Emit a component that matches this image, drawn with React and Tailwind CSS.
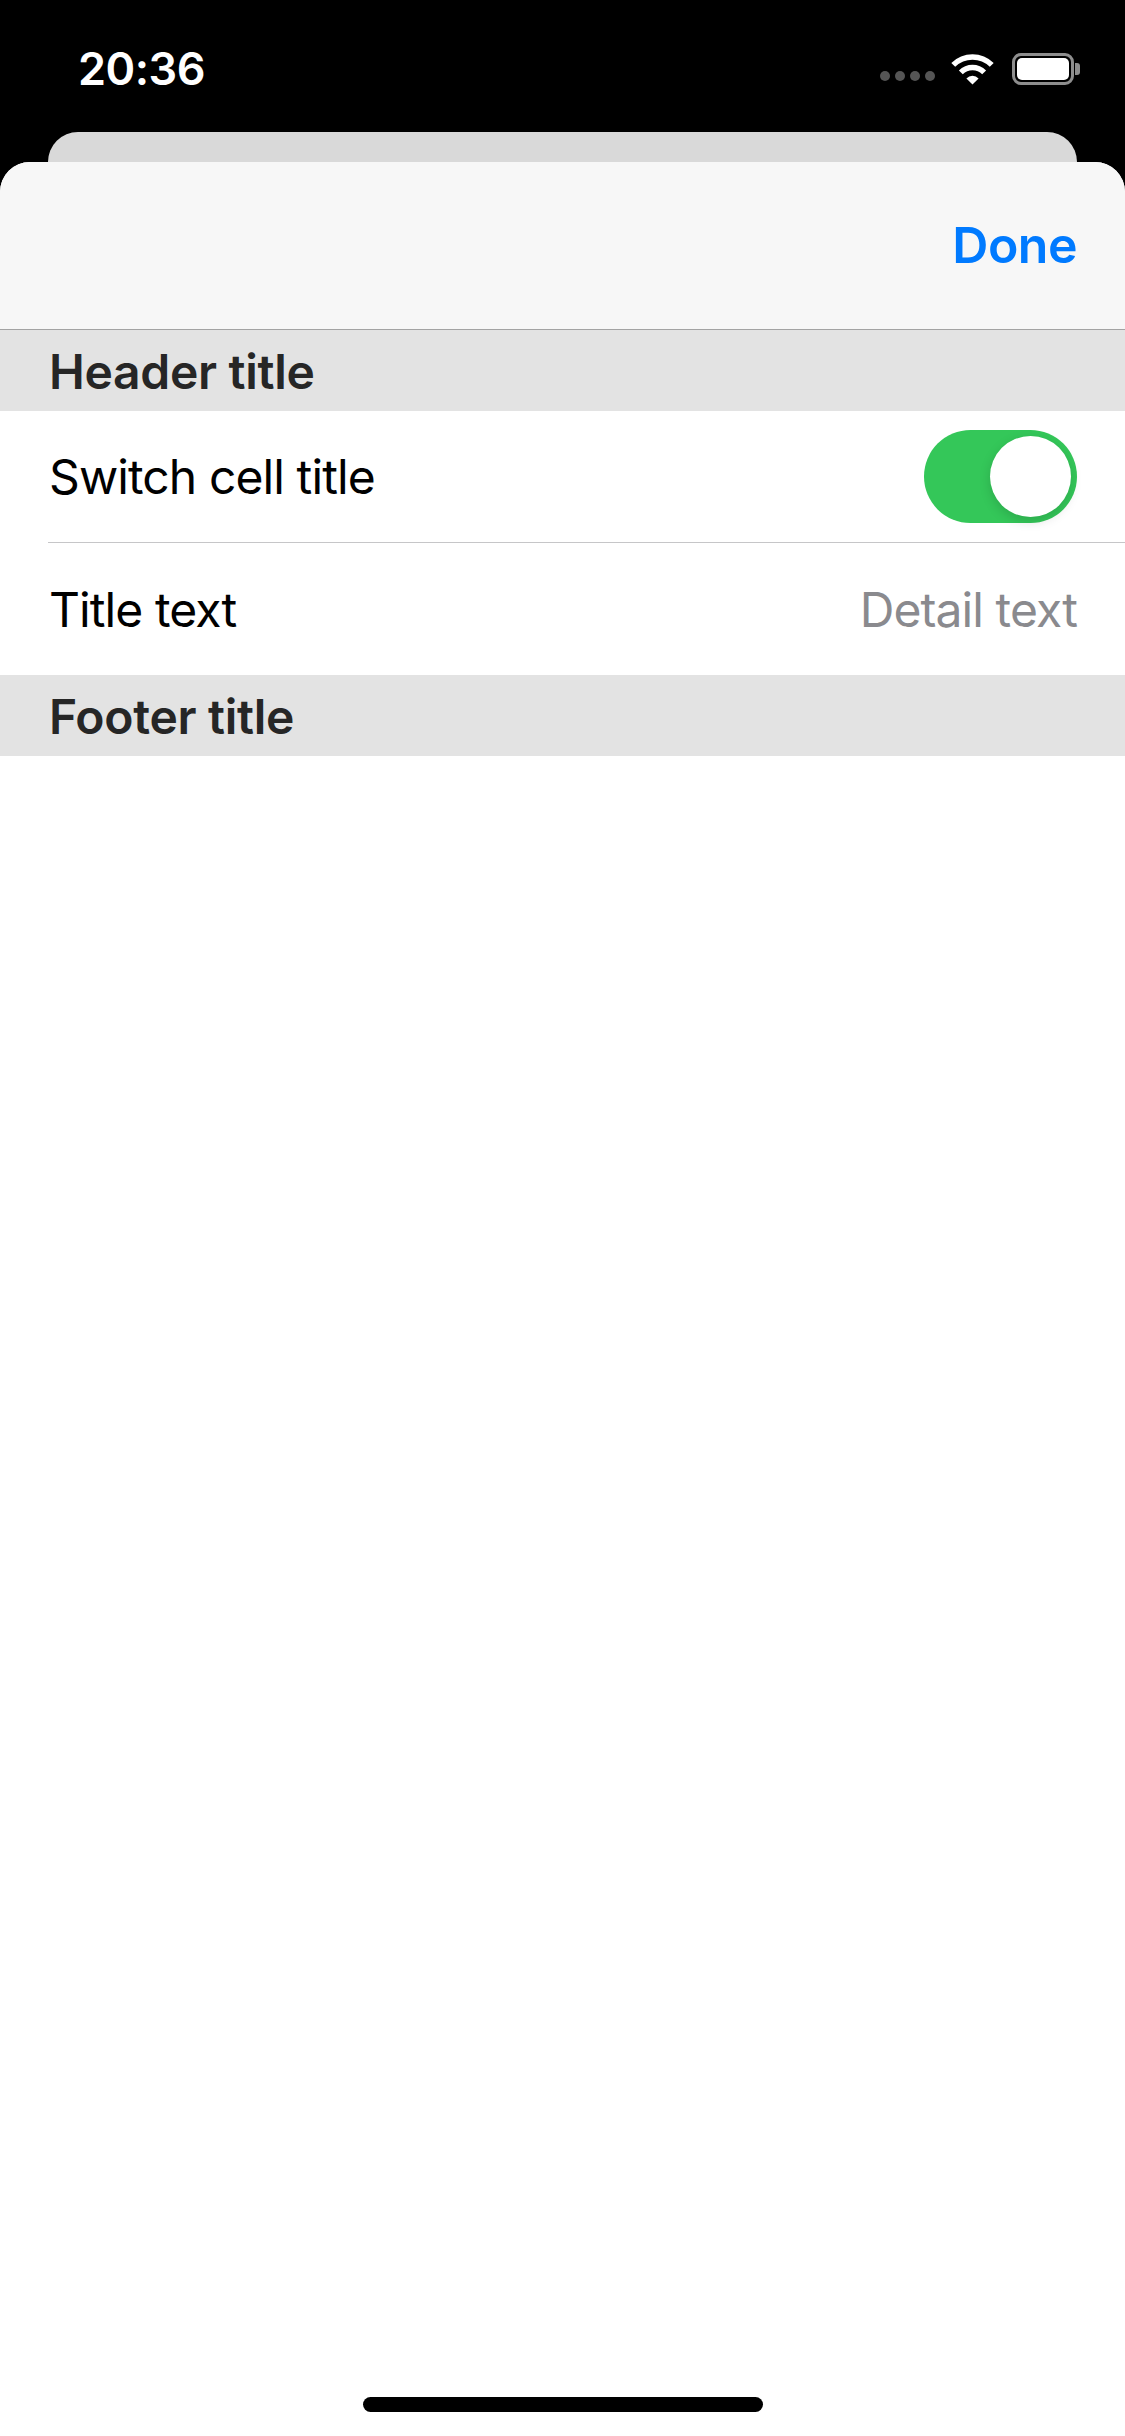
import React from 'react';

function Wifi() {
    return (
        <svg width="45" height="32" viewBox="0 0 45 32" fill="white">
            <path d="M1.3 9.9 A30 30 0 0 1 43.7 9.9 L39.8 13.8 A24.5 24.5 0 0 0 5.2 13.8 Z" />
            <path d="M8.9 17.4 A19.3 19.3 0 0 1 36.1 17.4 L32.2 21.3 A13.8 13.8 0 0 0 12.8 21.3 Z" />
            <path d="M22.5 31.5 L16.4 25.4 A8.6 8.6 0 0 1 28.6 25.4 Z" />
        </svg>
    );
}

function Battery() {
    return (
        <div className="flex items-center">
            <div className="w-[62px] h-[32px] rounded-[9px] border-[3px] border-[#8e8e8e] p-[2px]">
                <div className="w-full h-full rounded-[5px] bg-white" />
            </div>
            <div className="w-[5px] h-[12px] ml-[1px] rounded-r-[3px] bg-[#8e8e8e]" />
        </div>
    );
}

function Switch() {
    return (
        <div className="w-[153px] h-[93px] rounded-full bg-[#34c759] flex justify-end items-center p-[6px]">
            <div className="w-[81px] h-[81px] rounded-full bg-white shadow-[0_4px_12px_rgba(0,0,0,0.15)]" />
        </div>
    );
}

export default function App() {
    return (
        <div className="w-[1125px] h-[2436px] bg-black flex flex-col font-['Inter',sans-serif]">
            {/* status bar */}
            <div className="h-[132px] flex items-start pt-[48px] pl-[78px] pr-[45px]">
                <div className="h-[42px] flex items-center text-white text-[45px] font-semibold tracking-[-0.5px]">20:36</div>
                <div className="ml-auto h-[42px] flex items-center">
                    <div className="flex gap-[5px] mt-[14px]">
                        <div className="w-[10px] h-[10px] rounded-full bg-[#555555]" />
                        <div className="w-[10px] h-[10px] rounded-full bg-[#555555]" />
                        <div className="w-[10px] h-[10px] rounded-full bg-[#555555]" />
                        <div className="w-[10px] h-[10px] rounded-full bg-[#555555]" />
                    </div>
                    <div className="ml-[15px]"><Wifi /></div>
                    <div className="ml-[17px]"><Battery /></div>
                </div>
            </div>

            {/* card behind the sheet */}
            <div className="mx-[48px] h-[30px] rounded-t-[30px] bg-[#d9d9d9]" />

            {/* sheet */}
            <div className="flex-1 flex flex-col rounded-t-[30px] bg-white overflow-hidden">
                <div className="h-[168px] bg-[#f7f7f7] border-b border-[#a3a3a3] flex items-center justify-end pr-[48px]">
                    <span className="text-[50px] font-semibold text-[#007aff] tracking-[-0.5px]">Done</span>
                </div>

                <div className="h-[81px] bg-[#e3e3e3] flex items-center pl-[49px] pr-[48px]">
                    <span className="text-[48px] font-semibold text-[#262626] tracking-[-0.3px] mt-[2px]">Header title</span>
                </div>

                <div className="h-[131px] flex items-center justify-between pl-[49px] pr-[48px]">
                    <span className="text-[48px] text-black tracking-[-0.9px]">Switch cell title</span>
                    <Switch />
                </div>
                <div className="ml-[48px] h-px bg-[#c6c6c8]" />
                <div className="h-[132px] flex items-center justify-between pl-[49px] pr-[48px]">
                    <span className="text-[48px] text-black tracking-[-0.9px] mt-[2px]">Title text</span>
                    <span className="text-[48px] text-[#8a8a8e] tracking-[-0.9px] mt-[2px]">Detail text</span>
                </div>

                <div className="h-[81px] bg-[#e3e3e3] flex items-center pl-[49px] pr-[48px]">
                    <span className="text-[48px] font-semibold text-[#262626] tracking-[-0.3px] mt-[2px]">Footer title</span>
                </div>

                <div className="flex-1 flex items-end justify-center pb-[24px]">
                    <div className="w-[400px] h-[15px] rounded-full bg-black" />
                </div>
            </div>
        </div>
    );
}
